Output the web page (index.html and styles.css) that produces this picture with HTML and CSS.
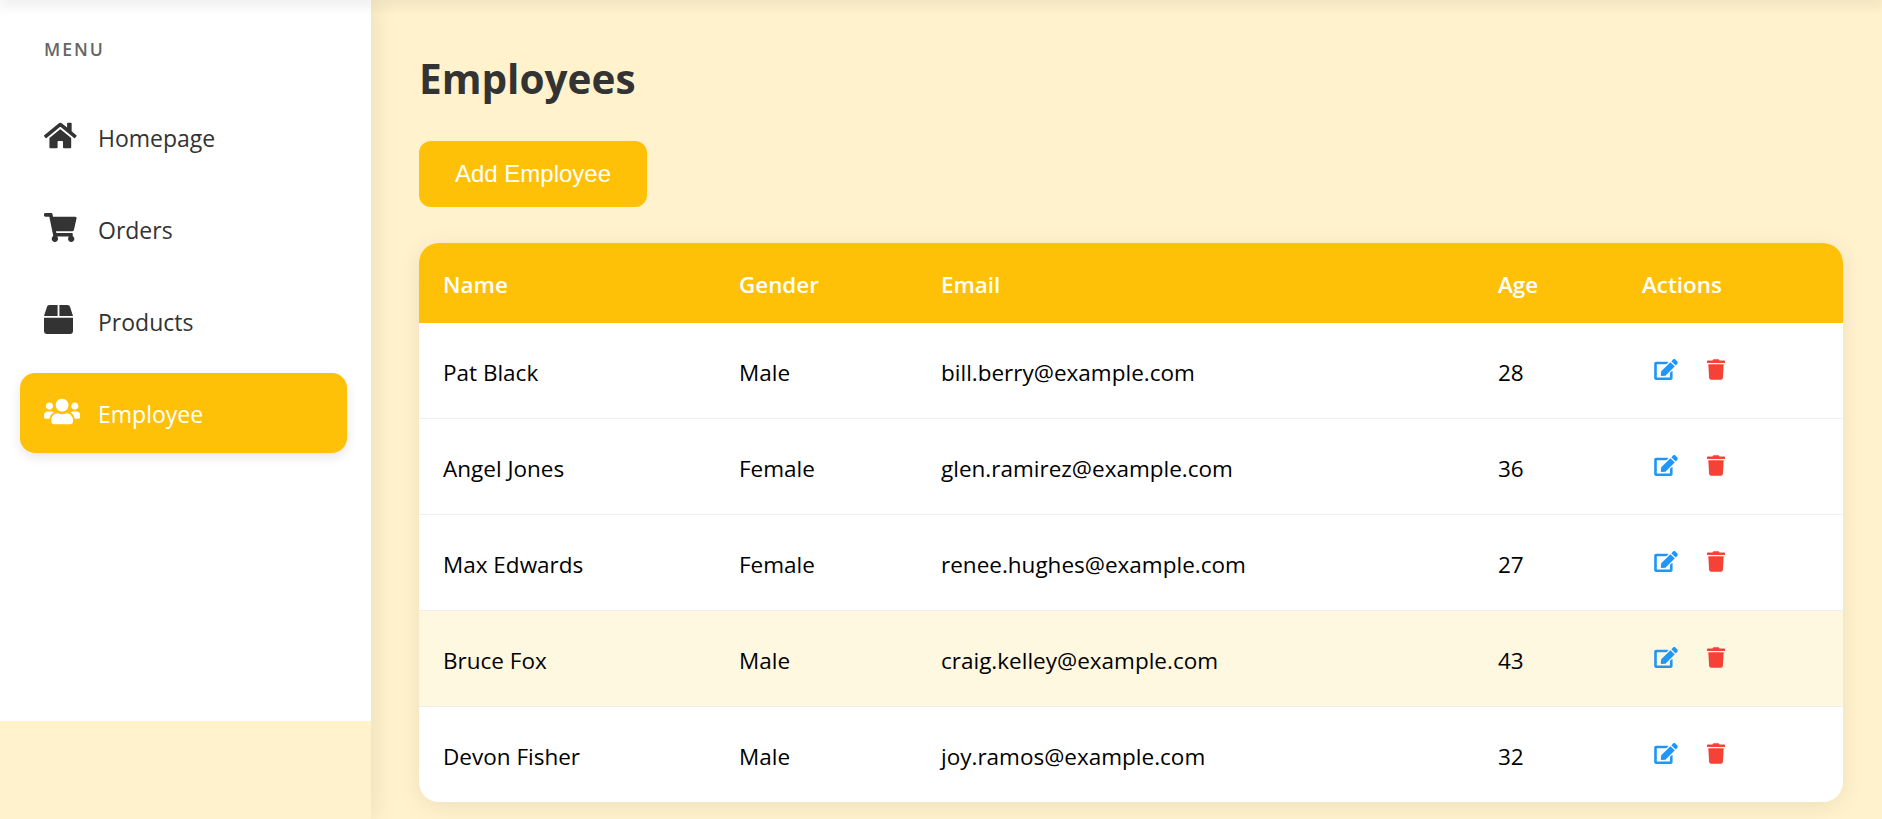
FILE: index.html
```html
<!DOCTYPE html>
<html lang="en">
<head>
  <meta charset="UTF-8">
  <title>Employees</title>
  <link rel="stylesheet" href="styles.css">
</head>
<body>
  <svg class="sprites">
    <symbol id="i-edit" viewBox="0 0 576 512"><path d="M402.6 83.2l90.2 90.2c3.8 3.8 3.8 10 0 13.8L274.4 405.6l-92.8 10.3c-12.4 1.4-22.9-9.1-21.5-21.5l10.3-92.8L388.8 83.2c3.8-3.8 10-3.8 13.8 0zm162-22.9l-48.8-48.8c-15.2-15.2-39.9-15.2-55.2 0l-35.4 35.4c-3.8 3.8-3.8 10 0 13.8l90.2 90.2c3.8 3.8 10 3.8 13.8 0l35.4-35.4c15.2-15.3 15.2-40 0-55.2zM384 346.2V448H64V128h229.8c3.2 0 6.2-1.3 8.5-3.5l40-40c7.6-7.6 2.2-20.5-8.5-20.5H48C21.5 64 0 85.5 0 112v352c0 26.5 21.5 48 48 48h352c26.5 0 48-21.5 48-48V306.2c0-10.7-12.9-16-20.5-8.5l-40 40c-2.2 2.3-3.5 5.3-3.5 8.5z"/></symbol>
    <symbol id="i-trash" viewBox="0 0 448 512"><path d="M432 32H312l-9.4-18.7A24 24 0 0 0 281.1 0H166.8a23.72 23.72 0 0 0-21.4 13.3L136 32H16A16 16 0 0 0 0 48v32a16 16 0 0 0 16 16h416a16 16 0 0 0 16-16V48a16 16 0 0 0-16-16zM53.2 467a48 48 0 0 0 47.9 45h245.8a48 48 0 0 0 47.9-45L416 128H32z"/></symbol>
  </svg>

  <div class="top-shade"></div>
  <div class="layout">
    <aside class="sidebar">
      <div class="side-panel">
        <h3 class="menu-title">MENU</h3>
        <nav class="menu">
          <a class="menu-item" href="#">
            <svg class="menu-icon" viewBox="0 0 576 512"><path d="M280.37 148.26L96 300.11V464a16 16 0 0 0 16 16l112.06-.29a16 16 0 0 0 15.92-16V368a16 16 0 0 1 16-16h64a16 16 0 0 1 16 16v95.64a16 16 0 0 0 16 16.05L464 480a16 16 0 0 0 16-16V300L295.67 148.26a12.19 12.19 0 0 0-15.3 0zM571.6 251.47L488 182.56V44.05a12 12 0 0 0-12-12h-56a12 12 0 0 0-12 12v72.61L318.47 43a48 48 0 0 0-61 0L4.34 251.47a12 12 0 0 0-1.6 16.9l25.5 31A12 12 0 0 0 45.15 301l235.22-193.74a12.19 12.19 0 0 1 15.3 0L530.9 301a12 12 0 0 0 16.9-1.6l25.5-31a12 12 0 0 0-1.7-16.93z"/></svg>
            <span>Homepage</span>
          </a>
          <a class="menu-item" href="#">
            <svg class="menu-icon" viewBox="0 0 576 512"><path d="M528.12 301.319l47.273-208C578.806 78.301 567.391 64 551.99 64H159.208l-9.166-44.81C147.758 8.021 137.93 0 126.529 0H24C10.745 0 0 10.745 0 24v16c0 13.255 10.745 24 24 24h69.883l70.248 343.435C147.325 417.1 136 435.222 136 456c0 30.928 25.072 56 56 56s56-25.072 56-56c0-15.674-6.447-29.835-16.824-40h209.647C430.447 426.165 424 440.326 424 456c0 30.928 25.072 56 56 56s56-25.072 56-56c0-22.172-12.888-41.332-31.579-50.405l5.517-24.276c3.413-15.018-8.002-29.319-23.403-29.319H218.117l-6.545-32h293.145c11.206 0 20.92-7.754 23.403-18.681z"/></svg>
            <span>Orders</span>
          </a>
          <a class="menu-item" href="#">
            <svg class="menu-icon" viewBox="0 0 512 512"><path d="M509.5 184.6L458.9 32.8C452.4 13.2 434.1 0 413.4 0H272v192h238.7c-.4-2.5-.4-5-1.2-7.4zM240 0H98.6c-20.7 0-39 13.2-45.5 32.8L2.5 184.6c-.8 2.4-.8 4.9-1.2 7.4H240V0zM0 224v240c0 26.5 21.5 48 48 48h416c26.5 0 48-21.5 48-48V224H0z"/></svg>
            <span>Products</span>
          </a>
          <a class="menu-item active" href="#">
            <svg class="menu-icon" viewBox="0 0 640 512"><path d="M96 224c35.3 0 64-28.7 64-64s-28.7-64-64-64-64 28.7-64 64 28.7 64 64 64zm448 0c35.3 0 64-28.7 64-64s-28.7-64-64-64-64 28.7-64 64 28.7 64 64 64zm32 32h-64c-17.6 0-33.5 7.1-45.1 18.6 40.3 22.1 68.9 62 75.1 109.4h66c17.7 0 32-14.3 32-32v-32c0-35.3-28.7-64-64-64zm-256 0c61.9 0 112-50.1 112-112S381.9 32 320 32 208 82.1 208 144s50.1 112 112 112zm76.8 32h-8.3c-20.8 10-43.9 16-68.5 16s-47.6-6-68.5-16h-8.3C179.6 288 128 339.6 128 403.2V432c0 26.5 21.5 48 48 48h288c26.5 0 48-21.5 48-48v-28.8c0-63.6-51.6-115.2-115.2-115.2zm-223.7-13.4C161.5 263.1 145.6 256 128 256H64c-35.3 0-64 28.7-64 64v32c0 17.7 14.3 32 32 32h65.9c6.3-47.4 34.9-87.3 75.2-109.4z"/></svg>
            <span>Employee</span>
          </a>
        </nav>
      </div>
    </aside>

    <main class="content">
      <h1 class="page-title">Employees</h1>
      <button class="add-btn">Add Employee</button>

      <div class="table-card">
        <table class="emp-table">
          <colgroup>
            <col class="col-name"><col class="col-gender"><col class="col-email"><col class="col-age"><col class="col-actions">
          </colgroup>
          <thead>
            <tr><th>Name</th><th>Gender</th><th>Email</th><th>Age</th><th>Actions</th></tr>
          </thead>
          <tbody>
            <tr>
              <td>Pat Black</td><td>Male</td><td>bill.berry@example.com</td><td>28</td>
              <td><div class="actions"><svg class="icon-edit"><use href="#i-edit"/></svg><svg class="icon-trash"><use href="#i-trash"/></svg></div></td>
            </tr>
            <tr>
              <td>Angel Jones</td><td>Female</td><td>glen.ramirez@example.com</td><td>36</td>
              <td><div class="actions"><svg class="icon-edit"><use href="#i-edit"/></svg><svg class="icon-trash"><use href="#i-trash"/></svg></div></td>
            </tr>
            <tr>
              <td>Max Edwards</td><td>Female</td><td>renee.hughes@example.com</td><td>27</td>
              <td><div class="actions"><svg class="icon-edit"><use href="#i-edit"/></svg><svg class="icon-trash"><use href="#i-trash"/></svg></div></td>
            </tr>
            <tr class="hovered">
              <td>Bruce Fox</td><td>Male</td><td>craig.kelley@example.com</td><td>43</td>
              <td><div class="actions"><svg class="icon-edit"><use href="#i-edit"/></svg><svg class="icon-trash"><use href="#i-trash"/></svg></div></td>
            </tr>
            <tr>
              <td>Devon Fisher</td><td>Male</td><td>joy.ramos@example.com</td><td>32</td>
              <td><div class="actions"><svg class="icon-edit"><use href="#i-edit"/></svg><svg class="icon-trash"><use href="#i-trash"/></svg></div></td>
            </tr>
          </tbody>
        </table>
      </div>
    </main>
  </div>
</body>
</html>
```

FILE: styles.css
```css
* {
  box-sizing: border-box;
}

html,
body {
  height: 100%;
}

body {
  margin: 0;
  display: flex;
  flex-direction: column;
  overflow: hidden;
  background: #fff2cc;
  color: #333;
  font-family: "Open Sans", "Noto Sans", sans-serif;
}

.sprites {
  display: none;
}

.top-shade {
  position: relative;
  z-index: 5;
  height: 0;
  box-shadow: 0 0 14px 3px rgba(0, 0, 0, 0.14);
}

.layout {
  display: flex;
  flex: 1;
  min-height: 0;
}

/* Sidebar */
.sidebar {
  width: 371px;
  flex-shrink: 0;
  box-shadow: 4px 0 24px rgba(0, 0, 0, 0.08);
}

.side-panel {
  height: 721px;
  padding: 38px 24px 0 20px;
  background: #fff;
}

.menu-title {
  margin: 0 0 37px 24px;
  font-size: 17.6px;
  line-height: 22px;
  font-weight: 600;
  letter-spacing: 2px;
  color: #666;
}

.menu {
  display: flex;
  flex-direction: column;
  gap: 12px;
}

.menu-item {
  display: grid;
  grid-template-columns: 54px 1fr;
  align-items: center;
  height: 80px;
  padding-left: 24px;
  border-radius: 15px;
  color: #333;
  font-size: 23px;
  text-decoration: none;
}

.menu-item span {
  padding-top: 2px;
}

.menu-icon {
  height: 29px;
  margin-top: -3px;
  fill: currentColor;
}

.menu-item.active {
  background: #ffc107;
  color: #fff;
  box-shadow: 0 4px 12px rgba(0, 0, 0, 0.1);
}

/* Main */
.content {
  flex: 1;
  min-width: 0;
  padding: 47px 39px 0 48px;
}

.page-title {
  margin: 0 0 31px;
  font-size: 40.5px;
  line-height: 63px;
  font-weight: 700;
  color: #333;
}

.add-btn {
  display: block;
  width: 228px;
  height: 66px;
  border: none;
  border-radius: 12px;
  background: #ffc107;
  color: #fff;
  font-family: "Liberation Sans", Arial, sans-serif;
  font-size: 24px;
}

.table-card {
  margin-top: 36px;
  border-radius: 20px;
  overflow: hidden;
  background: #fff;
  box-shadow: 0 4px 24px rgba(0, 0, 0, 0.08);
}

.emp-table {
  width: 100%;
  table-layout: fixed;
  border-collapse: separate;
  border-spacing: 0;
}

.col-name { width: 296px; }
.col-gender { width: 202px; }
.col-email { width: 557px; }
.col-age { width: 144px; }

.emp-table th {
  height: 80px;
  padding: 2px 24px 0;
  background: #ffc107;
  color: #fff;
  font-size: 22.4px;
  font-weight: 600;
  text-align: left;
}

.emp-table td {
  height: 96px;
  padding: 4px 24px 0;
  border-bottom: 1px solid #eee;
  color: #000;
  font-size: 22.5px;
}

.emp-table tbody tr:last-child td {
  height: 95px;
  border-bottom: none;
}

.emp-table tr.hovered td {
  background: #fff8e1;
}

.actions {
  display: flex;
  align-items: center;
  gap: 29px;
  padding-left: 12px;
  margin-top: -6px;
}

.icon-edit,
.icon-trash {
  height: 21px;
}

.icon-edit {
  width: 24px;
  fill: #2196f3;
}

.icon-trash {
  width: 18px;
  fill: #f44336;
}
```
